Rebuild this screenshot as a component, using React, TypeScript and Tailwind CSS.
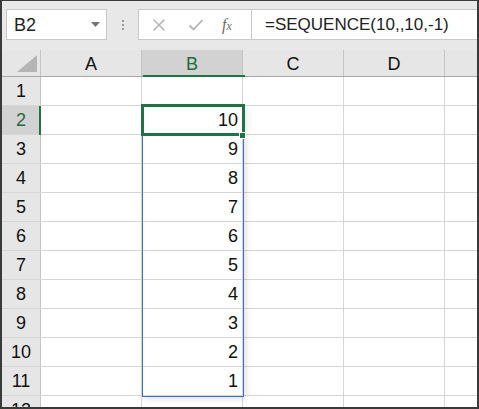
import React from "react";

const cols = ["A", "B", "C", "D"];
const rows = [1, 2, 3, 4, 5, 6, 7, 8, 9, 10, 11, 12];
const values: Record<number, number> = { 2: 10, 3: 9, 4: 8, 5: 7, 6: 6, 7: 5, 8: 4, 9: 3, 10: 2, 11: 1 };

const font = { fontFamily: '"Liberation Sans", Arial, sans-serif' };

export default function App() {
  return (
    <div
      className="flex h-[409px] w-[479px] flex-col overflow-hidden border-x-2 border-b-2 border-t border-[#3a3a3a] bg-white text-[#111]"
      style={font}
    >
      {/* Formula bar */}
      <div className="flex h-[49px] shrink-0 items-start bg-[#e8e8e8] pt-[8px] pl-[4px]">
        <div className="flex h-[31px] w-[101px] items-center justify-between border border-[#c8c8c8] bg-white pl-[7px] pr-[6px]">
          <span className="text-[18px] leading-none text-[#222]">B2</span>
          <svg width="9" height="6" viewBox="0 0 9 6">
            <path d="M0 0 H9 L4.5 5 Z" fill="#767676" />
          </svg>
        </div>
        <div className="flex h-[31px] w-[31px] flex-col items-center justify-center gap-[2px]">
          <span className="h-[2px] w-[2px] bg-[#9a9a9a]" />
          <span className="h-[2px] w-[2px] bg-[#9a9a9a]" />
          <span className="h-[2px] w-[2px] bg-[#9a9a9a]" />
        </div>
        <div className="flex h-[31px] w-[113px] items-center border border-r-0 border-[#c8c8c8] bg-white pl-[12px]">
          <svg width="14" height="14" viewBox="0 0 14 14" className="ml-[1px]">
            <path d="M1.5 1.5 L12.5 12.5 M12.5 1.5 L1.5 12.5" stroke="#b5b5b5" strokeWidth="1.6" />
          </svg>
          <svg width="16" height="14" viewBox="0 0 16 14" className="ml-[22px]">
            <path d="M1.5 7.5 L5.5 11.5 L14.5 2" stroke="#b5b5b5" strokeWidth="1.8" fill="none" />
          </svg>
          <span
            className="ml-[18px] text-[16px] italic leading-none text-[#6b6b6b]"
            style={{ fontFamily: '"Liberation Serif", "Times New Roman", serif' }}
          >
            f<span className="text-[12px]">x</span>
          </span>
        </div>
        <div className="flex h-[31px] flex-1 items-center border border-r-0 border-[#c8c8c8] bg-white pl-[13px]">
          <span className="text-[17px] leading-none text-[#222]">=SEQUENCE(10,,10,-1)</span>
        </div>
      </div>

      {/* Grid */}
      <div className="relative flex-1">
        {/* Column headers */}
        <div className="flex h-[27px] border-b border-[#a8a8a8] bg-[#e6e6e6]">
          <div className="relative w-[39px] shrink-0 border-r border-[#c4c4c4]">
            <svg width="20" height="17" viewBox="0 0 20 17" className="absolute bottom-[4px] right-[3px]">
              <path d="M20 0 V17 H0 Z" fill="#b4b4b4" />
            </svg>
          </div>
          {cols.map((c) => (
            <div
              key={c}
              className={`flex w-[101px] shrink-0 items-center justify-center border-r border-[#c4c4c4] pt-[2px] text-[18px] ${
                c === "B" ? "bg-[#d2d2d2] text-[#1d6b40]" : "text-[#111]"
              }`}
            >
              {c}
            </div>
          ))}
          <div className="flex-1" />
        </div>

        {/* Rows */}
        {rows.map((r) => (
          <div key={r} className="flex h-[29px] border-b border-[#d6d6d6]">
            <div
              className={`flex w-[39px] shrink-0 items-center justify-center border-r border-[#c4c4c4] text-[18px] ${
                r === 2 ? "bg-[#d2d2d2] text-[#1d6b40]" : "bg-[#e6e6e6] text-[#111]"
              }`}
            >
              {r}
            </div>
            {cols.map((c) => (
              <div
                key={c}
                className="flex w-[101px] shrink-0 items-center justify-end border-r border-[#d6d6d6] pr-[4px] text-[18px]"
              >
                {c === "B" && values[r] !== undefined ? values[r] : ""}
              </div>
            ))}
            <div className="flex-1" />
          </div>
        ))}

        {/* Header highlights */}
        <div className="absolute left-[141px] top-[25px] h-[2px] w-[102px] bg-[#217346]" />
        <div className="absolute left-[37px] top-[56px] h-[29px] w-[2px] bg-[#217346]" />

        {/* Spill range */}
        <div className="pointer-events-none absolute left-[140px] top-[56px] h-[291px] w-[102px] border border-[#3a6fd0] shadow-[2px_2px_6px_rgba(0,0,0,0.12)]" />

        {/* Active cell */}
        <div className="pointer-events-none absolute left-[139px] top-[54px] h-[32px] w-[104px] border-[3px] border-[#217346]" />
        <div className="absolute left-[237px] top-[82px] h-[7px] w-[7px] border border-white bg-[#217346]" />
      </div>
    </div>
  );
}
